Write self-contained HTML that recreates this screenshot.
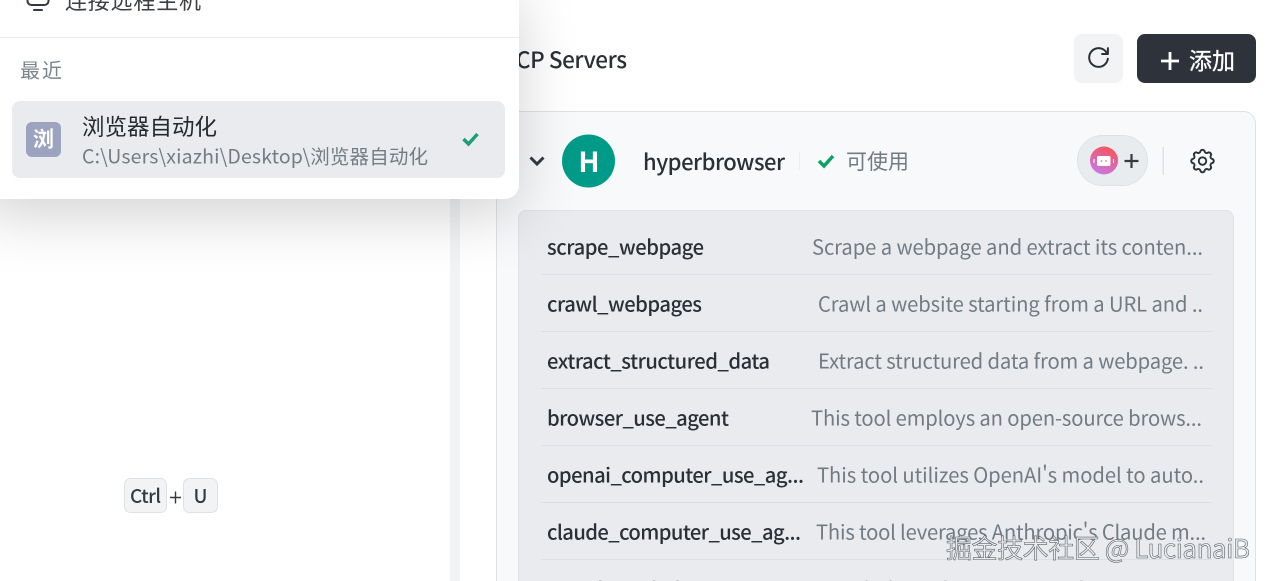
<!DOCTYPE html>
<html lang="zh">
<head>
<meta charset="utf-8">
<title>MCP Servers</title>
<style>
html,body{margin:0;padding:0;width:1268px;height:581px;overflow:hidden;background:#fff}
svg{position:absolute;left:0;top:0;display:block}
svg text{font-family:"Noto Sans CJK SC","Liberation Sans",sans-serif;white-space:pre}
.name{font-size:20.200px;font-weight:500;fill:#2b3036}
.desc{font-size:20.200px;fill:#727b84}
#pop{position:absolute;left:-20px;top:-20px;width:539px;height:219px;background:#fff;border-radius:14px;box-shadow:0 16px 60px rgba(0,0,0,.18)}
</style>
</head>
<body>
<svg width="1268" height="581" viewBox="0 0 1268 581">
  <rect x="450" y="0" width="10" height="581" fill="#f1f3f5"/>
  <text x="516" y="68" font-size="22.500" font-weight="500" fill="#2b3036" textLength="111">CP Servers</text>
  <rect x="1074" y="34" width="49" height="49" rx="8" fill="#f1f3f5"/>
  <g transform="translate(1084.500 43.500) scale(1.17)" fill="none" stroke="#2b3036" stroke-width="1.700" stroke-linecap="round" stroke-linejoin="round">
    <path d="M19.933 13.041a8 8 0 1 1 -9.925 -8.788c3.899 -1 7.935 1.007 9.425 4.747"/>
    <path d="M20 4v5h-5"/>
  </g>
  <rect x="1137" y="34" width="119" height="49" rx="8" fill="#2e333b"/>
  <path d="M1170 52v18M1161 61h18" stroke="#fff" stroke-width="2.800" fill="none"/>
  <text x="1189" y="69" font-size="23" fill="#fff" stroke="#fff" stroke-width="0.300" textLength="46">添加</text>

  <rect x="496.500" y="111.500" width="759" height="520" rx="12" fill="#f8f9fa" stroke="#dee2e6"/>
  <path d="M530.500 157.500l6.500 6.500l6.500 -6.500" fill="none" stroke="#343a40" stroke-width="3"/>
  <circle cx="588.500" cy="161" r="26.500" fill="#009b88"/>
  <text x="589" y="172" font-size="28" font-weight="700" fill="#fff" text-anchor="middle">H</text>
  <text x="643" y="170" font-size="22" font-weight="500" fill="#2b3036" textLength="142">hyperbrowser</text>
  <rect x="799" y="152" width="1" height="18" fill="#eceef0"/>
  <path d="M819 161l5 5l9 -10" fill="none" stroke="#0ea060" stroke-width="3.500"/>
  <text x="846" y="169" font-size="21" fill="#727b84" textLength="63">可使用</text>

  <rect x="1077.500" y="135.500" width="70" height="50" rx="25" fill="#e9ecef" stroke="#dee2e6"/>
  <defs>
    <linearGradient id="g" x1="0.700" y1="0" x2="0.300" y2="1">
      <stop offset="0" stop-color="#f8525c"/>
      <stop offset="1" stop-color="#c77ae6"/>
    </linearGradient>
  </defs>
  <circle cx="1104" cy="160.500" r="14" fill="url(#g)"/>
  <rect x="1097" y="156" width="13.500" height="10" rx="1.500" fill="#fff"/>
  <circle cx="1101.500" cy="161" r="0.900" fill="#e77"/>
  <circle cx="1106" cy="161" r="0.900" fill="#e77"/>
  <path d="M1094 159v4M1113.500 159v4" stroke="#fff" stroke-width="1"/>
  <path d="M1131.500 154v14M1124.500 161h14" stroke="#343a40" stroke-width="2.200" fill="none"/>
  <rect x="1162.500" y="147" width="1.500" height="28" fill="#dee2e6"/>
  <g transform="translate(1187.500 146) scale(1.25)" fill="none" stroke="#2b3036" stroke-width="1.500" stroke-linecap="round" stroke-linejoin="round">
    <path d="M10.325 4.317c.426 -1.756 2.924 -1.756 3.35 0a1.724 1.724 0 0 0 2.573 1.066c1.543 -.94 3.31 .826 2.37 2.37a1.724 1.724 0 0 0 1.065 2.572c1.756 .426 1.756 2.924 0 3.35a1.724 1.724 0 0 0 -1.066 2.573c.94 1.543 -.826 3.31 -2.37 2.37a1.724 1.724 0 0 0 -2.572 1.065c-.426 1.756 -2.924 1.756 -3.35 0a1.724 1.724 0 0 0 -2.573 -1.066c-1.543 .94 -3.31 -.826 -2.37 -2.37a1.724 1.724 0 0 0 -1.065 -2.572c-1.756 -.426 -1.756 -2.924 0 -3.35a1.724 1.724 0 0 0 1.066 -2.573c-.94 -1.543 .826 -3.31 2.37 -2.37c1 .608 2.296 .07 2.572 -1.065"/>
    <circle cx="12" cy="12" r="3"/>
  </g>

  <rect x="518.500" y="210.500" width="715" height="420" rx="8" fill="#e9ebef" stroke="#dee2e6"/>
  <g fill="#dcdfe3">
    <rect x="541" y="274" width="671" height="1"/>
    <rect x="541" y="331" width="671" height="1"/>
    <rect x="541" y="388" width="671" height="1"/>
    <rect x="541" y="445" width="671" height="1"/>
    <rect x="541" y="502" width="671" height="1"/>
    <rect x="541" y="559" width="671" height="1"/>
  </g>
  <text class="name" x="547" y="254.500" textLength="157">scrape_webpage</text>
  <text class="desc" x="812" y="254.500" textLength="391">Scrape a webpage and extract its conten...</text>
  <text class="name" x="547" y="311.500" textLength="155">crawl_webpages</text>
  <text class="desc" x="818" y="311.500" textLength="385">Crawl a website starting from a URL and ..</text>
  <text class="name" x="547" y="368.500" textLength="223">extract_structured_data</text>
  <text class="desc" x="818" y="368.500" textLength="386">Extract structured data from a webpage. ..</text>
  <text class="name" x="547" y="425.500" textLength="182">browser_use_agent</text>
  <text class="desc" x="811" y="425.500" textLength="391">This tool employs an open-source brows...</text>
  <text class="name" x="547" y="482.500" textLength="257">openai_computer_use_ag...</text>
  <text class="desc" x="817" y="482.500" textLength="387">This tool utilizes OpenAI's model to auto..</text>
  <text class="name" x="547" y="539.500" textLength="254">claude_computer_use_ag...</text>
  <text class="desc" x="816" y="539.500" textLength="390">This tool leverages Anthropic's Claude m...</text>
  <text class="name" x="547" y="597" textLength="170">search_with_bing</text>
  <text class="desc" x="812" y="597" textLength="391">Search the web using Bing. This tool allo...</text>

  <rect x="124.500" y="478.500" width="42" height="34" rx="6" fill="#f1f3f5" stroke="#dee2e6"/>
  <text x="130" y="503" font-size="19" font-weight="500" fill="#343a40" textLength="31">Ctrl</text>
  <path d="M175.500 491.500v12M170 497.500h11" stroke="#343a40" stroke-width="1.400" fill="none"/>
  <rect x="183.500" y="478.500" width="34" height="34" rx="6" fill="#f1f3f5" stroke="#dee2e6"/>
  <text x="200.500" y="503" font-size="19" font-weight="500" fill="#343a40" text-anchor="middle">U</text>
</svg>

<div id="pop"></div>

<svg width="1268" height="581" viewBox="0 0 1268 581">
  <g fill="none" stroke="#343a40" stroke-width="2" stroke-linecap="round">
    <path d="M27.500 -6v7a4 4 0 0 0 4 4h13a4 4 0 0 0 4 -4v-7"/>
    <path d="M34 10h8"/>
  </g>
  <text x="65" y="9" font-size="22" fill="#3b4046" textLength="136">连接远程主机</text>
  <rect x="0" y="37" width="519" height="1" fill="#e9ecef"/>
  <text x="20" y="77.500" font-size="20" fill="#7b838b" textLength="42">最近</text>
  <rect x="12" y="101" width="493" height="77" rx="8" fill="#e9ebef"/>
  <rect x="26" y="122" width="35" height="35" rx="6" fill="#9ba3bf"/>
  <text x="43.500" y="146.500" font-size="21" font-weight="700" fill="#fff" text-anchor="middle">浏</text>
  <text x="82" y="135" font-size="22.500" fill="#25292e" textLength="135">浏览器自动化</text>
  <text x="82" y="163.500" font-size="19.500" fill="#737c85" textLength="346">C:\Users\xiazhi\Desktop\浏览器自动化</text>
  <path d="M463.500 139l5 5l9 -10" fill="none" stroke="#1f9e78" stroke-width="3.500"/>

  <text x="946" y="558" font-size="26" fill="#e9ecef" stroke="#5f6468" stroke-width="0.600" textLength="304">掘金技术社区 @ LucianaiB</text>
</svg>
</body>
</html>
